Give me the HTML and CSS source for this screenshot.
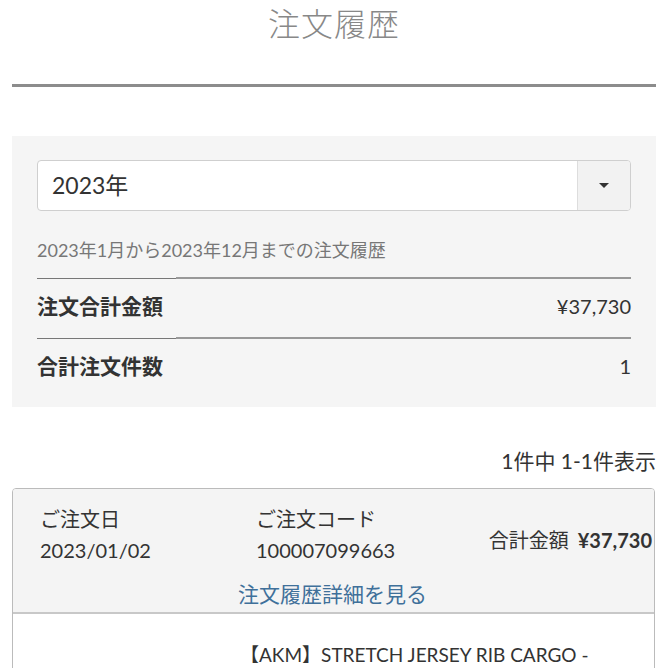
FILE: index.html
```html
<!DOCTYPE html>
<html lang="ja">
<head>
    <meta charset="UTF-8">
    <meta name="viewport" content="width=device-width, initial-scale=1.0">
    <title>注文履歴</title>
    <link rel="stylesheet" href="styles.css">
</head>

<body>
    <h1 class="page-title">注文履歴</h1>
    <hr class="title-rule">

    <!-- year filter + summary -->
    <section class="summary">
        <div class="year-select">
            <span class="year-value">2023年</span>
            <span class="year-caret"></span>
        </div>

        <p class="summary-range">2023年1月から2023年12月までの注文履歴</p>

        <table class="summary-table">
            <tr>
                <th>注文合計金額</th>
                <td>¥37,730</td>
            </tr>
            <tr>
                <th>合計注文件数</th>
                <td>1</td>
            </tr>
        </table>
    </section>

    <p class="result-count">1件中 1-1件表示</p>

    <!-- order card -->
    <div class="order-card">
        <div class="order-head">
            <div class="order-cols">
                <div class="order-col">
                    <div>ご注文日</div>
                    <div>2023/01/02</div>
                </div>
                <div class="order-col">
                    <div>ご注文コード</div>
                    <div>100007099663</div>
                </div>
                <div class="order-total">合計金額<span class="order-price">¥37,730</span></div>
            </div>
            <a href="#" class="order-link">注文履歴詳細を見る</a>
        </div>
        <div class="order-body">
            <div class="order-thumb"></div>
            <div class="order-item">
                <p class="item-name">【AKM】STRETCH JERSEY RIB CARGO - PANTS</p>
            </div>
        </div>
    </div>
</body>

</html>
```

FILE: styles.css
```css
body {
    margin: 0;
    padding: 0 12px 40px;
    background-color: #fff;
    color: #333;
    font-family: Lato, "Noto Sans CJK JP", sans-serif;
}

p {
    margin: 0;
}

.page-title {
    margin: 0;
    font-size: 32px;
    line-height: 48px;
    font-weight: 300;
    color: #888;
    text-align: center;
    letter-spacing: 1px;
}

.title-rule {
    margin: 36px 0 49px;
    border: 0;
    height: 3px;
    background-color: #8c8c8c;
}

/* summary box */
.summary {
    background-color: #f5f5f5;
    padding: 24px 25px 10px;
}

.year-select {
    display: flex;
    height: 49px;
    background-color: #fff;
    border: 1px solid #cfcfcf;
    border-radius: 4px;
    overflow: hidden;
}

.year-value {
    flex: 1;
    padding-left: 14px;
    font-size: 23px;
    line-height: 49px;
}

.year-caret {
    width: 52px;
    background-color: #f2f2f2;
    border-left: 1px solid #ddd;
    position: relative;
}

.year-caret::after {
    content: "";
    position: absolute;
    left: 21px;
    top: 22px;
    border-left: 5px solid transparent;
    border-right: 5px solid transparent;
    border-top: 5px solid #333;
}

.summary-range {
    margin: 28px 0 16px;
    font-size: 18px;
    line-height: 22px;
    color: #777;
}

.summary-table {
    width: 100%;
    border-collapse: collapse;
}

.summary-table th,
.summary-table td {
    padding: 14px 0 18px;
    line-height: 26px;
}

.summary-table th {
    width: 139px;
    text-align: left;
    font-size: 21px;
    font-weight: bold;
    border-top: 1px solid #777;
}

.summary-table td {
    text-align: right;
    font-size: 20px;
    border-top: 2px solid #999;
}

.result-count {
    margin: 40px 0 13px;
    font-size: 21px;
    line-height: 28px;
    text-align: right;
}

/* order card */
.order-card {
    margin-right: 1px;
    border: 1px solid #bbb;
    border-radius: 4px;
    overflow: hidden;
}

.order-head {
    background-color: #f4f4f4;
    border-bottom: 2px solid #c8c8c8;
    padding: 15px 2px 3px 27px;
}

.order-cols {
    display: grid;
    grid-template-columns: 216px 190px 1fr;
    align-items: center;
}

.order-col {
    font-size: 20px;
    line-height: 31px;
}

.order-total {
    text-align: right;
    font-size: 20px;
    white-space: nowrap;
    padding-top: 8px;
}

.order-price {
    margin-left: 9px;
    font-weight: bold;
}

.order-link {
    display: block;
    margin: 12px 0 0 -27px;
    text-align: center;
    font-size: 21px;
    line-height: 31px;
    color: #3f709a;
    text-decoration: none;
}

.order-body {
    display: flex;
    padding: 27px 20px;
}

.order-thumb {
    width: 207px;
    flex-shrink: 0;
}

.item-name {
    font-size: 19px;
    line-height: 28px;
    padding-right: 40px;
}
```
